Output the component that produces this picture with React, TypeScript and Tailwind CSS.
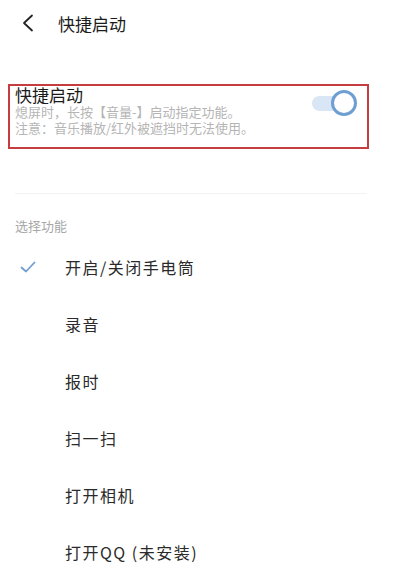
const items = ['开启/关闭手电筒', '录音', '报时', '扫一扫', '打开相机', '打开QQ (未安装)'];

export default function App() {
  return (
    <div
      className="w-[419px] h-[580px] bg-white overflow-hidden"
      style={{ fontFamily: '"Noto Sans CJK SC", "Noto Sans", sans-serif' }}
    >
      {/* Header */}
      <div className="h-[46px] flex items-center pl-[21px]">
        <svg width="14" height="18" viewBox="0 0 14 18" fill="none">
          <path d="M11 1.5L3 9l8 7.5" stroke="#222" strokeWidth="1.8" strokeLinecap="round" strokeLinejoin="round" />
        </svg>
        <span className="ml-[23px] text-[17px] text-[#1c1c1c] leading-none">快捷启动</span>
      </div>

      {/* Quick launch switch, highlighted */}
      <div className="mt-[38px] ml-[8px] w-[361px] h-[65px] border-2 border-[#c53d3f] flex items-start pl-[5px] pr-[10px]">
        <div className="flex-1 flex flex-col">
          <span className="text-[17px] leading-[18px] text-[#1a1a1a]">快捷启动</span>
          <span className="text-[13px] leading-[16px] text-[#b5b5b5]">熄屏时，长按【音量-】启动指定功能。</span>
          <span className="text-[13px] leading-[16px] text-[#b5b5b5]">注意：音乐播放/红外被遮挡时无法使用。</span>
        </div>
        <div className="relative mt-[4px] w-[45px] h-[26px] flex items-center">
          <div className="w-[36px] h-[15px] rounded-full bg-[#d9e6f5]" />
          <div className="absolute right-0 top-0 w-[26px] h-[26px] rounded-full bg-white border-[3px] border-[#6f9fd2]" />
        </div>
      </div>

      <div className="mt-[44px] ml-[15px] w-[352px] h-px bg-[#f2f2f2]" />

      <div className="mt-[24px] pl-[15px] text-[13px] leading-[16px] text-[#a8a8a8]">选择功能</div>

      <div className="mt-[4px] flex flex-col">
        {items.map((item, i) => (
          <div key={item} className="h-[57px] flex items-center">
            <div className="w-[65px] flex pl-[20px]">
              {i === 0 && (
                <svg width="16" height="12" viewBox="0 0 16 12" fill="none">
                  <path d="M1.5 6.5l4.5 4L14.5 1.5" stroke="#6f9fd2" strokeWidth="1.8" strokeLinecap="round" strokeLinejoin="round" />
                </svg>
              )}
            </div>
            <span className="text-[16px] tracking-[1.5px] text-[#2a2a2a] leading-none">{item}</span>
          </div>
        ))}
      </div>
    </div>
  );
}
